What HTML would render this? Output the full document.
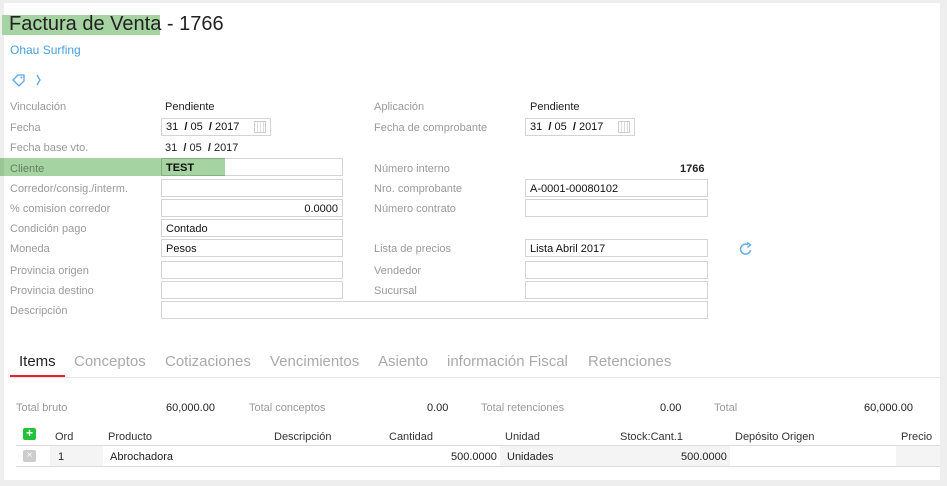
<!DOCTYPE html>
<html><head><meta charset="utf-8"><style>
*{margin:0;padding:0;box-sizing:border-box}
body{width:947px;height:486px;background:#eeeeee;font-family:"Liberation Sans",sans-serif;position:relative;overflow:hidden}
#p{position:absolute;left:4px;top:3px;width:936px;height:477px;background:#fff}
.a{position:absolute;white-space:nowrap}
.l{font-size:11px;color:#9a9a9a}
.v{font-size:11px;color:#222}
.i{position:absolute;height:18px;border:1px solid #d4d4d4;background:#fff;font-size:11px;color:#111;padding:2px 4px;line-height:13px}
.tab{position:absolute;top:353px;font-size:15px;color:#aaa}
.th{font-size:11px;color:#333;position:absolute;top:431px}
.cal{position:absolute;width:12px;height:12px;border:1px solid #ccc;background:repeating-linear-gradient(90deg,#fff 0 2px,#ddd 2px 3px)}
</style></head><body>
<div id="p"></div>
<div class="a" style="left:2px;top:15px;width:158px;height:20px;background:#a6d3a2"></div>
<div class="a" style="left:9px;top:13px;font-size:20px;color:#222">Factura de Venta - 1766</div>
<div class="a" style="left:10px;top:43px;font-size:12px;color:#4a9fe0">Ohau Surfing</div>
<svg class="a" style="left:11px;top:72px" width="32" height="16"><path d="M2 8 L7 3 L13 3 L13 9 L8 14 Z" fill="none" stroke="#5aa8e8" stroke-width="1.3"/><circle cx="10.5" cy="5.5" r="1" fill="#5aa8e8"/><path d="M26 3 L29 8 L26 13" fill="none" stroke="#5aa8e8" stroke-width="1.3"/></svg>
<div class="a l" style="left:10px;top:101px">Vinculación</div><div class="a v" style="left:165px;top:101px">Pendiente</div>
<div class="a l" style="left:10px;top:122px">Fecha</div>
<div class="i" style="left:161px;top:118px;width:110px">31 &nbsp;<b>/</b> 05 &nbsp;<b>/</b> 2017</div><div class="cal" style="left:254px;top:121px"></div>
<div class="a l" style="left:10px;top:142px">Fecha base vto.</div><div class="a v" style="left:165px;top:142px">31 &nbsp;<b>/</b> 05 &nbsp;<b>/</b> 2017</div>
<div class="a l" style="left:10px;top:163px">Cliente</div>
<div class="i" style="left:161px;top:158px;width:182px;font-weight:bold;padding-top:3px">TEST</div>
<div class="a" style="left:0;top:158px;width:225px;height:18px;background:#a6d3a2;mix-blend-mode:multiply"></div>
<div class="a l" style="left:10px;top:183px">Corredor/consig./interm.</div><div class="i" style="left:161px;top:179px;width:182px"></div>
<div class="a l" style="left:10px;top:203px">% comision corredor</div><div class="i" style="left:161px;top:199px;width:182px;text-align:right;padding-top:3px">0.0000</div>
<div class="a l" style="left:10px;top:223px">Condición pago</div><div class="i" style="left:161px;top:219px;width:182px;padding-top:3px">Contado</div>
<div class="a l" style="left:10px;top:243px">Moneda</div><div class="i" style="left:161px;top:239px;width:182px;padding-top:3px">Pesos</div>
<div class="a l" style="left:10px;top:265px">Provincia origen</div><div class="i" style="left:161px;top:261px;width:182px"></div>
<div class="a l" style="left:10px;top:285px">Provincia destino</div><div class="i" style="left:161px;top:281px;width:182px"></div>
<div class="a l" style="left:10px;top:305px">Descripción</div><div class="i" style="left:161px;top:301px;width:547px"></div>
<div class="a l" style="left:374px;top:101px">Aplicación</div><div class="a v" style="left:530px;top:101px">Pendiente</div>
<div class="a l" style="left:374px;top:122px">Fecha de comprobante</div>
<div class="i" style="left:525px;top:118px;width:110px">31 &nbsp;<b>/</b> 05 &nbsp;<b>/</b> 2017</div><div class="cal" style="left:618px;top:121px"></div>
<div class="a l" style="left:374px;top:163px">Número interno</div><div class="a v" style="left:680px;top:163px;font-weight:bold">1766</div>
<div class="a l" style="left:374px;top:183px">Nro. comprobante</div><div class="i" style="left:525px;top:179px;width:183px;padding-top:3px">A-0001-00080102</div>
<div class="a l" style="left:374px;top:203px">Número contrato</div><div class="i" style="left:525px;top:199px;width:183px"></div>
<div class="a l" style="left:374px;top:243px">Lista de precios</div><div class="i" style="left:525px;top:239px;width:183px;padding-top:3px">Lista Abril 2017</div>
<svg class="a" style="left:738px;top:241px" width="16" height="16"><path d="M12.5 9 A5 5 0 1 1 10 3.7" fill="none" stroke="#5aa8e8" stroke-width="1.4"/><path d="M9 1.5 L12.5 3.8 L9.5 6.5" fill="none" stroke="#5aa8e8" stroke-width="1.4"/></svg>
<div class="a l" style="left:374px;top:265px">Vendedor</div><div class="i" style="left:525px;top:261px;width:183px"></div>
<div class="a l" style="left:374px;top:285px">Sucursal</div><div class="i" style="left:525px;top:281px;width:183px"></div>
<div class="tab" style="left:19px;color:#222">Items</div>
<div class="tab" style="left:74px">Conceptos</div>
<div class="tab" style="left:165px">Cotizaciones</div>
<div class="tab" style="left:270px">Vencimientos</div>
<div class="tab" style="left:378px">Asiento</div>
<div class="tab" style="left:447px">información Fiscal</div>
<div class="tab" style="left:588px">Retenciones</div>
<div class="a" style="left:10px;top:377px;width:930px;height:1px;background:#e6e6e6"></div>
<div class="a" style="left:10px;top:375px;width:55px;height:2px;background:#e8202a"></div>
<div class="a l" style="left:16px;top:402px">Total bruto</div><div class="a v" style="left:166px;top:402px">60,000.00</div>
<div class="a l" style="left:249px;top:402px">Total conceptos</div><div class="a v" style="left:427px;top:402px">0.00</div>
<div class="a l" style="left:481px;top:402px">Total retenciones</div><div class="a v" style="left:660px;top:402px">0.00</div>
<div class="a l" style="left:714px;top:402px">Total</div><div class="a v" style="left:864px;top:402px">60,000.00</div>
<div class="a" style="left:23px;top:428px;width:13px;height:12px;background:#22c23a;border-radius:2px;color:#fff;font-size:12px;line-height:11px;text-align:center;font-weight:bold">+</div>
<div class="th" style="left:55px">Ord</div><div class="th" style="left:108px">Producto</div><div class="th" style="left:274px">Descripción</div><div class="th" style="left:389px">Cantidad</div><div class="th" style="left:505px">Unidad</div><div class="th" style="left:620px">Stock:Cant.1</div><div class="th" style="left:735px">Depósito Origen</div><div class="th" style="left:901px">Precio</div>
<div class="a" style="left:16px;top:445px;width:924px;height:1px;background:#ddd"></div>
<div class="a" style="left:16px;top:466px;width:924px;height:1px;background:#ddd"></div>
<div class="a" style="left:50px;top:446px;width:53px;height:20px;background:#f4f4f4"></div>
<div class="a" style="left:500px;top:446px;width:230px;height:20px;background:#f4f4f4"></div>
<div class="a" style="left:896px;top:446px;width:44px;height:20px;background:#f4f4f4"></div>
<div class="a" style="left:23px;top:450px;width:13px;height:12px;background:#ccc;border-radius:2px;color:#fff;font-size:10px;line-height:12px;text-align:center">×</div>
<div class="a v" style="left:58px;top:451px">1</div><div class="a v" style="left:110px;top:451px">Abrochadora</div>
<div class="a v" style="left:451px;top:451px">500.0000</div><div class="a v" style="left:507px;top:451px">Unidades</div><div class="a v" style="left:681px;top:451px">500.0000</div>
</body></html>
